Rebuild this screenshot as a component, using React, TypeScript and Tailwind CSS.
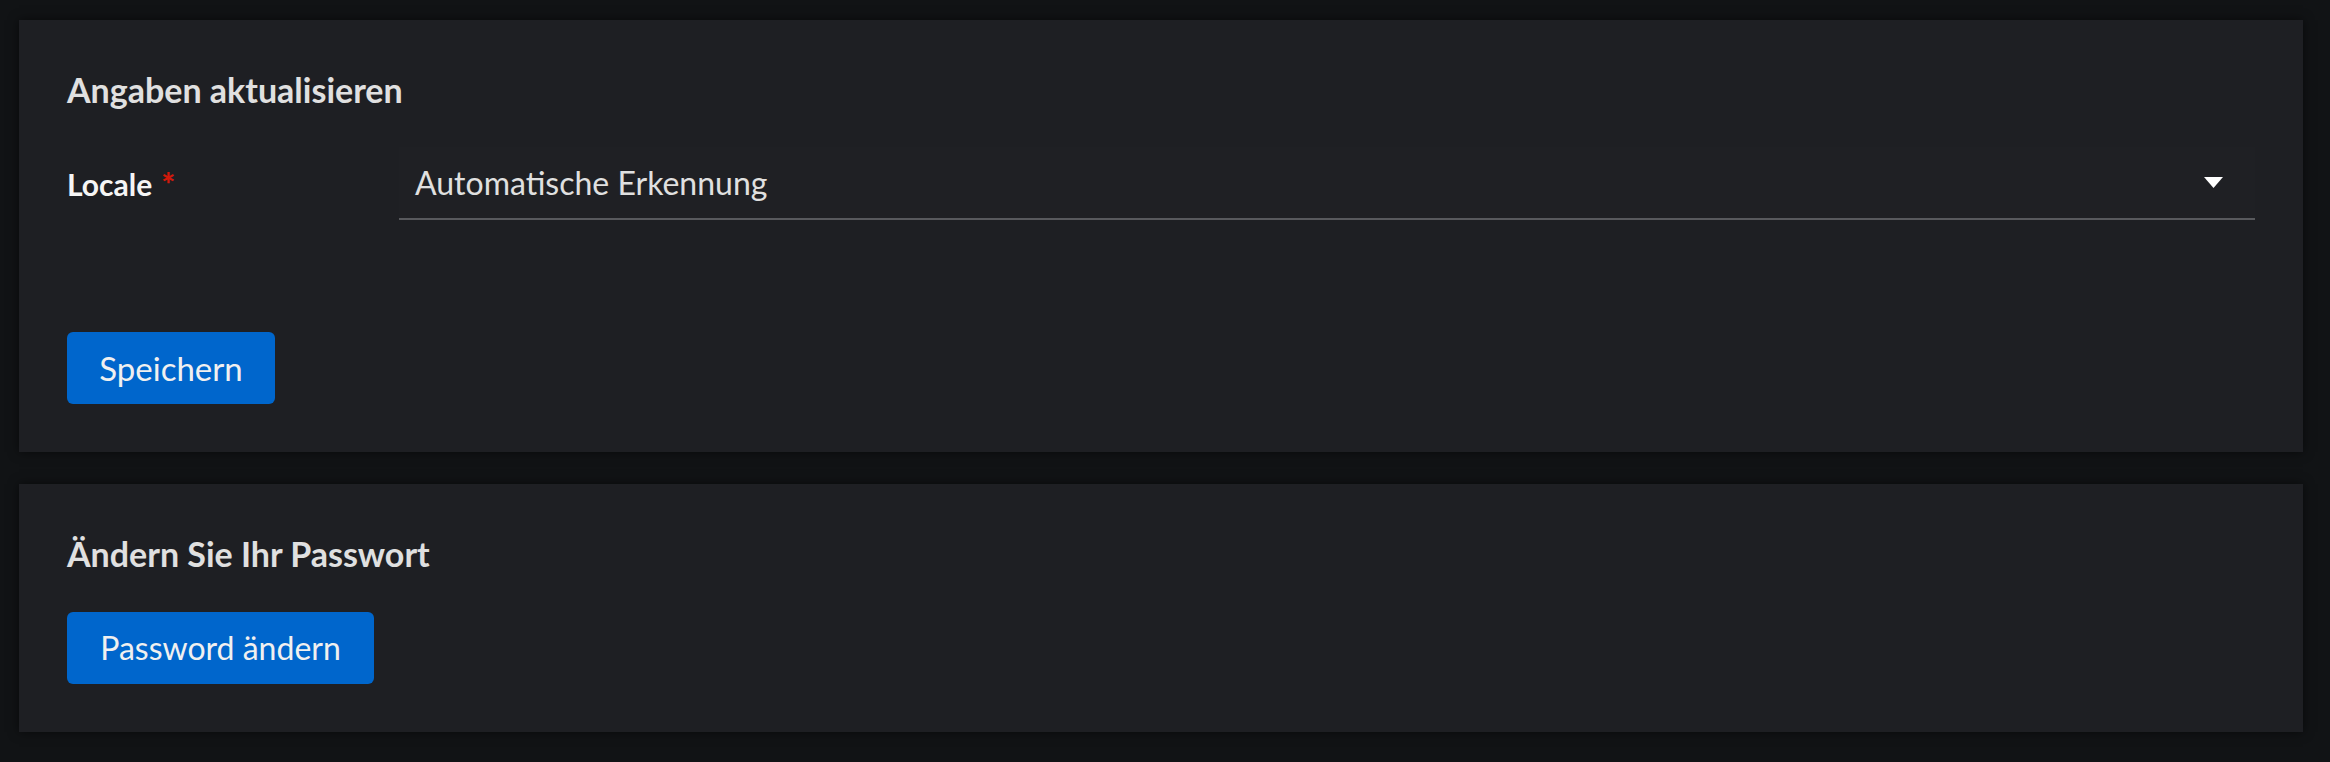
import React from "react";

const body = { fontFamily: "Lato, 'Open Sans', sans-serif" };

function Caret() {
  return (
    <svg width="19" height="11" viewBox="0 0 19 11" aria-hidden="true">
      <path d="M0 0 H19 L9.5 11 Z" fill="#ffffff" />
    </svg>
  );
}

export default function App() {
  return (
    <div
      className="min-h-[762px] w-full bg-[#111315] pl-[19px] pr-[27px] pt-[20px] pb-[30px] flex flex-col gap-[32px]"
      style={body}
    >
      {/* Card 1 */}
      <section className="bg-[#1e1f23] shadow-[0_0_10px_rgba(0,0,0,0.55)] p-[48px] flex flex-col">
        <h2 className="text-[34px] leading-[44px] font-bold text-[#e0e0e0]">
          Angaben aktualisieren
        </h2>
        <div className="mt-[35px] flex items-stretch">
          <div className="w-[332px] shrink-0 flex items-center">
            <div className="flex items-baseline">
              <span className="text-[30px] leading-[36px] font-bold text-[#f5f5f5]">
                Locale
              </span>
              <span className="ml-[9px] text-[33px] leading-[36px] font-black text-[#d2190b]">
                *
              </span>
            </div>
          </div>
          <div className="flex-1 h-[73px] bg-[#1f2024] border-b-2 border-[#58595d] pl-[16px] pr-[32px] flex items-center justify-between">
            <span className="text-[32px] leading-[40px] text-[#e0e0e0]">
              Automatische Erkennung
            </span>
            <Caret />
          </div>
        </div>
        <div className="mt-[112px] flex">
          <button className="w-[208px] h-[72px] rounded-[6px] bg-[#0066cc] text-[33px] leading-[40px] text-[#f0f0f0] flex items-center justify-center">
            Speichern
          </button>
        </div>
      </section>

      {/* Card 2 */}
      <section className="bg-[#1e1f23] shadow-[0_0_10px_rgba(0,0,0,0.55)] p-[48px] flex flex-col">
        <h2 className="text-[34px] leading-[44px] font-bold text-[#e0e0e0]">
          Ändern Sie Ihr Passwort
        </h2>
        <div className="mt-[36px] flex">
          <button className="w-[307px] h-[72px] rounded-[6px] bg-[#0066cc] text-[32px] leading-[40px] text-[#f0f0f0] flex items-center justify-center">
            Password ändern
          </button>
        </div>
      </section>
    </div>
  );
}
